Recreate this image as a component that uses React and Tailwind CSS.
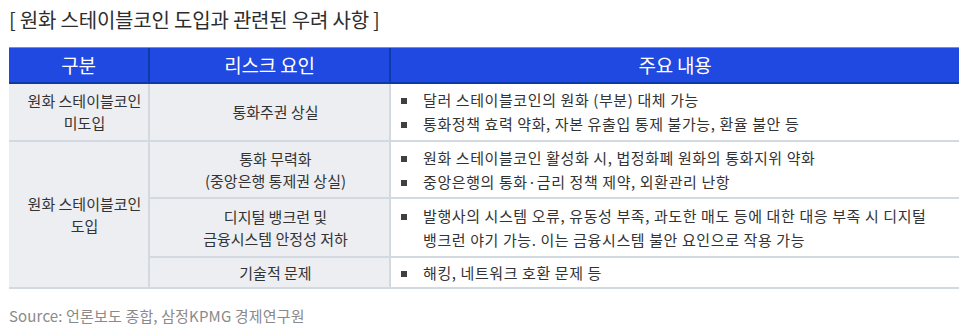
import React from "react";

const font = { fontFamily: '"Noto Sans CJK KR", "Noto Sans", sans-serif' };

function Bullets({ items }) {
  return (
    <div className="flex flex-col justify-center h-full pl-[10px] gap-[2px]">
      {items.map((t, i) => (
        <div key={i} className="flex items-start leading-[22px] whitespace-nowrap">
          <span className="mt-[9px] w-[6px] h-[6px] bg-[#404040] shrink-0" />
          <span className="ml-[16px]">{t}</span>
        </div>
      ))}
    </div>
  );
}

export default function App() {
  const cellL =
    "bg-[#eceef1] border-r-2 border-b-2 border-[#d3d9e0] flex items-center justify-center text-center leading-[22px] tracking-normal pl-[12px]";
  const cellR = "bg-white border-b-2 border-[#d3d9e0] tracking-[0.04em]";
  return (
    <div
      className="w-[971px] h-[335px] bg-white text-[#333] text-[15px] px-[9px]"
      style={font}
    >
      <div className="h-[47px] pt-[6px] text-[20px] leading-[28px] text-[#2d2d2d] tracking-[-0.01em]">
        [ 원화 스테이블코인 도입과 관련된 우려 사항 ]
      </div>
      <div className="w-[950px]">
        <div className="grid grid-cols-[141px_241px_1fr] h-[37px] bg-[#1f49e0] border-t border-[#7d8fb8] border-b-2 border-b-[#0c3aa6] text-white text-[19px] tracking-[-0.01em]">
          <div className="flex items-center justify-center border-r-2 border-[#0c3aa6]">구분</div>
          <div className="flex items-center justify-center border-r-2 border-[#0c3aa6]">리스크 요인</div>
          <div className="flex items-center justify-center">주요 내용</div>
        </div>
        <div className="grid grid-cols-[141px_241px_1fr] grid-rows-[58px_57px_59px_31px]">
          <div className={cellL}>
            원화 스테이블코인
            <br />
            미도입
          </div>
          <div className={cellL}>통화주권 상실</div>
          <div className={cellR}>
            <Bullets
              items={[
                "달러 스테이블코인의 원화 (부분) 대체 가능",
                "통화정책 효력 약화, 자본 유출입 통제 불가능, 환율 불안 등",
              ]}
            />
          </div>
          <div className={cellL + " row-span-3"}>
            원화 스테이블코인
            <br />
            도입
          </div>
          <div className={cellL}>
            통화 무력화
            <br />
            (중앙은행 통제권 상실)
          </div>
          <div className={cellR}>
            <Bullets
              items={[
                "원화 스테이블코인 활성화 시, 법정화폐 원화의 통화지위 약화",
                "중앙은행의 통화·금리 정책 제약, 외환관리 난항",
              ]}
            />
          </div>
          <div className={cellL}>
            디지털 뱅크런 및
            <br />
            금융시스템 안정성 저하
          </div>
          <div className={cellR}>
            <div className="flex items-start h-full pl-[10px] pt-[5px] leading-[24px] whitespace-nowrap">
              <span className="mt-[10px] w-[6px] h-[6px] bg-[#404040] shrink-0" />
              <span className="ml-[16px]">
                발행사의 시스템 오류, 유동성 부족, 과도한 매도 등에 대한 대응 부족 시 디지털
                <br />
                뱅크런 야기 가능. 이는 금융시스템 불안 요인으로 작용 가능
              </span>
            </div>
          </div>
          <div className={cellL}>기술적 문제</div>
          <div className={cellR}>
            <Bullets items={["해킹, 네트워크 호환 문제 등"]} />
          </div>
        </div>
      </div>
      <div className="mt-[17px] text-[15px] text-[#8a8a8a] leading-[20px] tracking-[0.01em]">
        Source: 언론보도 종합, 삼정KPMG 경제연구원
      </div>
    </div>
  );
}
